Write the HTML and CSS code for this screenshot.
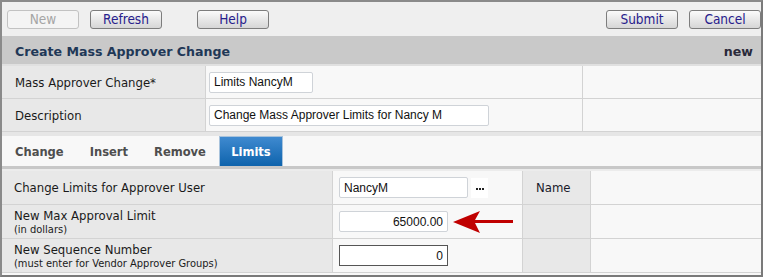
FILE: index.html
```html
<!DOCTYPE html>
<html>
<head>
<meta charset="utf-8">
<link rel="stylesheet" href="styles.css">
</head>
<body>
<div class="frame">
  <div class="toolbar">
    <div class="tb-left">
      <button class="btn disabled">New</button>
      <button class="btn">Refresh</button>
      <button class="btn help">Help</button>
    </div>
    <div class="tb-right">
      <button class="btn">Submit</button>
      <button class="btn">Cancel</button>
    </div>
  </div>
  <div class="header">
    <span class="title">Create Mass Approver Change</span>
    <span class="status">new</span>
  </div>
  <div class="form">
    <div class="lbl">Mass Approver Change*</div>
    <div class="val"><input class="txt w104" value="Limits NancyM"></div>
    <div class="extra"></div>
    <div class="lbl">Description</div>
    <div class="val"><input class="txt w280" value="Change Mass Approver Limits for Nancy M"></div>
    <div class="extra"></div>
  </div>
  <div class="tabs">
    <span class="tab">Change</span>
    <span class="tab">Insert</span>
    <span class="tab">Remove</span>
    <span class="tab active">Limits</span>
  </div>
  <div class="grid2">
    <div class="lbl2">Change Limits for Approver User</div>
    <div class="val2"><input class="txt w129" value="NancyM"><span class="dots"><i></i><i></i><i></i></span></div>
    <div class="name">Name</div>
    <div class="last"></div>

    <div class="lbl2">New Max Approval Limit<small>(in dollars)</small></div>
    <div class="val2"><input class="txt w109 num" value="65000.00">
      <svg class="arrow" width="62" height="24" viewBox="0 0 62 24"><path d="M0 12 L27 1 L22 10 L60 10 L60 13 L22 13 L27 23 Z" fill="#c00000"/></svg>
    </div>
    <div class="name"></div>
    <div class="last"></div>

    <div class="lbl2">New Sequence Number<small>(must enter for Vendor Approver Groups)</small></div>
    <div class="val2"><input class="txt w109 num dark" value="0"></div>
    <div class="name"></div>
    <div class="last"></div>
  </div>
</div>
</body>
</html>
```
FILE: styles.css
```css
* { box-sizing: border-box; }
html, body { margin: 0; padding: 0; background: #fff; }
.frame {
  width: 763px; height: 277px;
  border-top: 2px solid #8a8a8a;
  border-left: 2px solid #8a8a8a;
  border-right: 2px solid #7a7a7a;
  border-bottom: 2px solid #7a7a7a;
  background: #f8f8f8;
  font-family: "DejaVu Sans Condensed", "DejaVu Sans", sans-serif;
  overflow: hidden;
}
.toolbar {
  height: 34px; background: #efefef;
  display: flex; justify-content: space-between; align-items: center;
  padding: 0 0 0 5px;
}
.tb-left, .tb-right { display: flex; align-items: center; }
.btn {
  width: 72px; height: 19px; padding: 0;
  font-family: "DejaVu Sans Condensed", "DejaVu Sans", sans-serif;
  font-size: 13.5px; color: #27208c;
  background: linear-gradient(#fbfbfb, #e6e6e6 55%, #d6d6d6);
  border: 1px solid #7d7d7d; border-radius: 3px;
  margin-right: 11px; line-height: 16px;
}
.tb-left .btn.help { margin-left: 24px; }
.tb-right .btn { margin-right: 0; margin-left: 11px; }
.btn.disabled { color: #a5a5a5; border-color: #c2c2c2; background: #f4f4f4; }
.header {
  height: 28px; background: #c9c9c9;
  display: flex; justify-content: space-between; align-items: center;
  padding: 2px 8px 0 13px;
  font-weight: bold; font-size: 12.6px; color: #1f3857;
  font-family: "DejaVu Sans", sans-serif;
}
.header .status { color: #2a2a3a; }
.form {
  display: grid; grid-template-columns: 204px 377px 1fr;
  border-top: 2px solid #e0e0e0;
}
.form > div { height: 33px; border-bottom: 1px solid #d3d3d3; display: flex; align-items: center; }
.lbl { background: #e8e8e8; padding-left: 13px; font-size: 13px; color: #1a1a1a; border-right: 1px solid #d3d3d3; }
.val { background: #f8f8f8; padding-left: 3px; border-right: 1px solid #d3d3d3; }
.extra { background: #f8f8f8; }
.txt {
  height: 21px; border: 1px solid #cfd3d8; border-radius: 2px; background: #fff;
  font-family: "Liberation Sans", Arial, sans-serif; font-size: 12px; color: #111;
  padding: 0 4px;
}
.w104 { width: 104px; }
.w280 { width: 280px; }
.w129 { width: 129px; }
.w109 { width: 109px; }
.num { text-align: right; }
.dark { border: 1px solid #555; border-radius: 0; }
.tabs {
  border-top: 4px solid #e6e6e6;
  height: 37px; display: flex; align-items: stretch;
  border-bottom: 3px solid #c8c8c8;
}
.tab {
  display: flex; align-items: center; justify-content: center;
  font-weight: bold; font-size: 12.8px; color: #4e4e4e;
  padding: 0 13px; font-family: "DejaVu Sans Condensed", "DejaVu Sans", sans-serif;
}
.tab.active {
  color: #fff; background: linear-gradient(#3f8ad0, #0e63ac);
  border: 1px solid #a8c3dc; border-bottom: none; width: 64px; padding: 0;
}
.grid2 {
  display: grid; grid-template-columns: 331px 190px 68px 1fr;
  border-top: 2px solid #ececec;
}
.grid2 > div { height: 34px; border-bottom: 1px solid #d3d3d3; display: flex; align-items: center; }
.lbl2 {
  background: #e8e8e8; border-right: 1px solid #d3d3d3;
  padding-left: 12px; font-size: 13px; color: #1a1a1a;
  flex-direction: column; align-items: flex-start !important; justify-content: center;
  line-height: 15px;
}
.lbl2 small { font-size: 11px; line-height: 13px; }
.val2 { background: #f8f8f8; padding-left: 6px; border-right: 1px solid #d3d3d3; }
.dots {
  width: 17px; height: 20px; margin-left: 3px; background: #fff;
  display: flex; align-items: center; justify-content: center; gap: 1px; padding-top: 3px;
}
.dots i { width: 2px; height: 2px; background: #222; display: block; }
.arrow { margin-left: 5px; }
.name { background: #e8e8e8; border-right: 1px solid #d3d3d3; padding-left: 13px; font-size: 13px; color: #1a1a2a; }
.last { background: #f8f8f8; }
```
